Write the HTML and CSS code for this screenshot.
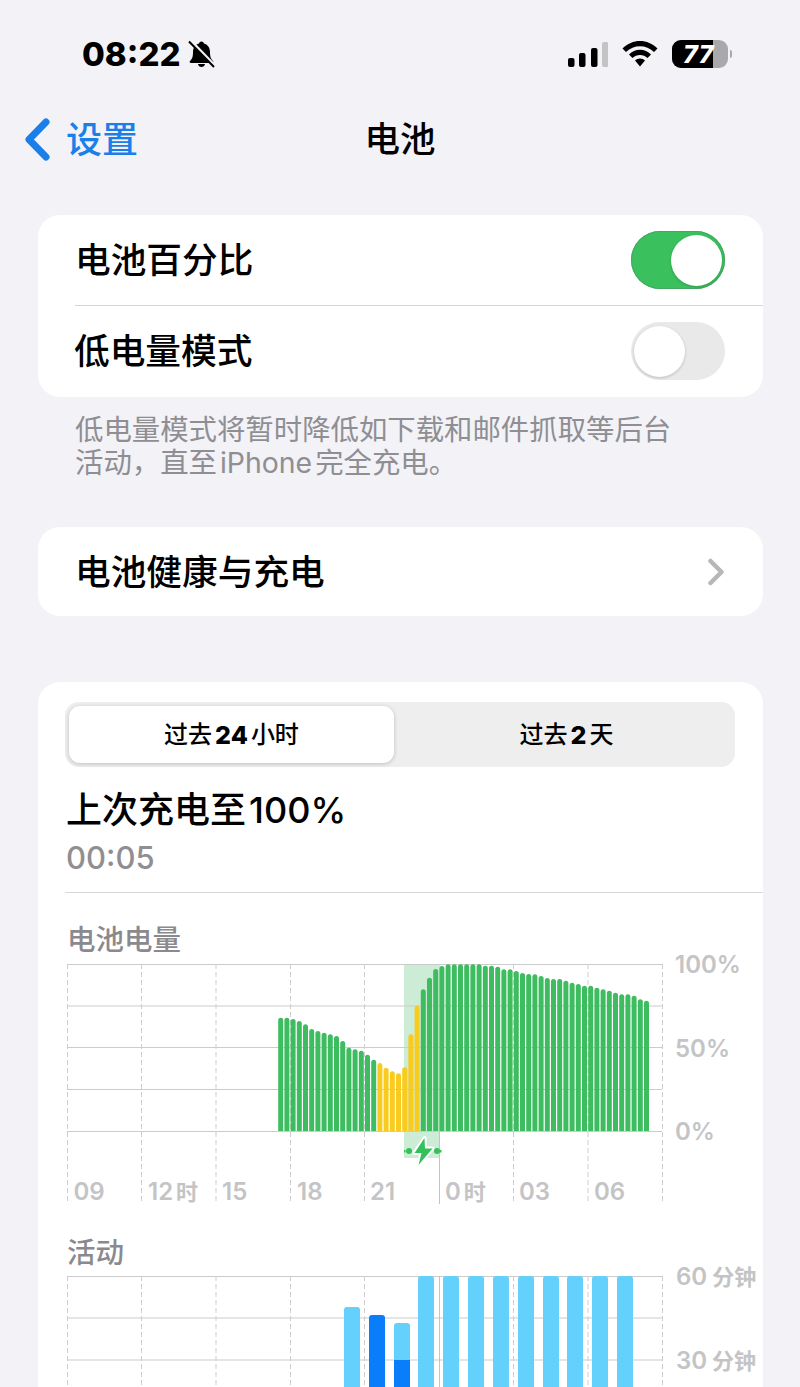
FILE: index.html
```html
<!DOCTYPE html>
<html lang="zh">
<head>
<meta charset="utf-8">
<title>电池</title>
<link rel="stylesheet" href="styles.css">
</head>
<body>
<div class="page">
  <header class="status">
    <div class="status-left">
      <span class="clock">08:22</span>
      <svg class="bell" viewBox="0 0 27 28" width="27" height="28" aria-hidden="true">
        <path d="M13.5 1.5c1.5 0 2.3 1 2.5 2 3.5 1 6 4 6 8.500 0 5 1 7 3 9 .8.900.300 2-1 2H3c-1.300 0-1.800-1.100-1-2 2-2 3-4 3-9 0-4.500 2.500-7.500 6-8.500.200-1 1-2 2.500-2z"/>
        <path d="M10 24h7c-.300 2-1.700 3-3.500 3S10.300 26 10 24z"/>
        <path class="bell-gap" d="M2 0L27 26"/>
        <path class="bell-slash" d="M1 1.500L26 27"/>
      </svg>
    </div>
    <div class="status-right">
      <svg class="signal" viewBox="0 0 40 25" width="40" height="25" aria-hidden="true">
        <rect y="16" width="6.500" height="9" rx="2"/>
        <rect x="11" y="11" width="6.500" height="14" rx="2"/>
        <rect x="23" y="6" width="6.500" height="19" rx="2"/>
        <rect class="signal-off" x="34" width="6.500" height="25" rx="2"/>
      </svg>
      <svg class="wifi" viewBox="0 0 36 26" width="36" height="26" aria-hidden="true">
        <path d="M18 0C11.500 0 5.500 2.600 0.500 7.500L4 11C8 7.200 12.800 5.200 18 5.200S28 7.200 32 11l3.500-3.500C30.500 2.600 24.500 0 18 0z"/>
        <path d="M18 8.800c-4.300 0-8 1.700-11 4.700l3.500 3.500c2.100-2 4.600-3.100 7.500-3.100s5.400 1.100 7.500 3.100l3.500-3.500c-3-3-6.700-4.700-11-4.700z"/>
        <path d="M18 17.500c-2 0-3.700.700-5 2L18 25.500l5-6c-1.300-1.300-3-2-5-2z"/>
      </svg>
      <div class="battery">
        <div class="battery-body"><span class="battery-fill">77</span></div>
        <span class="battery-nub"></span>
      </div>
    </div>
  </header>

  <nav class="nav">
    <div class="back">
      <svg class="back-icon" viewBox="0 0 28 44" width="28" height="44" aria-hidden="true">
        <path d="M22 4L5 21.500 22 39"/>
      </svg>
      <span>设置</span>
    </div>
    <h1 class="nav-title">电池</h1>
  </nav>

  <section class="card card-first">
    <div class="row">
      <span>电池百分比</span>
      <div class="toggle toggle-on"><span class="knob"></span></div>
    </div>
    <div class="row-line"></div>
    <div class="row row-low">
      <span>低电量模式</span>
      <div class="toggle toggle-off"><span class="knob"></span></div>
    </div>
  </section>
  <p class="caption">低电量模式将暂时降低如下载和邮件抓取等后台<br>活动，直至<span class="latin">iPhone</span>完全充电。</p>

  <section class="card card-health">
    <div class="row row-health">
      <span>电池健康与充电</span>
      <svg class="disclosure" viewBox="0 0 18 28" width="18" height="28" aria-hidden="true">
        <path d="M3.500 3L14.500 14 3.500 25"/>
      </svg>
    </div>
  </section>

  <section class="card card-usage">
    <div class="segmented">
      <div class="segment segment-active">过去<b class="num">24</b>小时</div>
      <div class="segment segment-rest">过去<b class="num">2</b>天</div>
    </div>
    <h2 class="charge-title">上次充电至<span class="charge-num">100%</span></h2>
    <div class="charge-time">00:05</div>
    <div class="usage-line"></div>

    <h3 class="chart-label">电池电量</h3>
    <svg class="chart chart-battery" viewBox="65 960 698 250" width="698" height="250">
      <defs>
        <clipPath id="level-clip"><rect x="270" y="960" width="400" height="171"/></clipPath>
      </defs>
      <rect class="charge-band" x="404" y="964" width="36" height="194"/>
      <path class="grid-h" d="M67 964.500H662M67 1006H662M67 1047.500H662M67 1089.500H662M67 1131.500H662"/>
      <path class="grid-v" d="M67.500 964V1204M141.500 964V1204M216 964V1204M290.500 964V1204M364.500 964V1204M513.500 964V1204M588 964V1204M662.500 964V1204"/>
      <path class="grid-solid" d="M439.500 1131V1204"/>
      <g clip-path="url(#level-clip)">
        <path class="bars-green" d="M280.700 1140V1020.200M286.900 1140V1020.200M293.100 1140V1021.500M299.300 1140V1023.500M305.500 1140V1026.800M311.700 1140V1031.500M317.900 1140V1033.500M324.100 1140V1035.200M330.300 1140V1036.800M336.500 1140V1038.500M342.700 1140V1043.500M348.900 1140V1050.200M355.100 1140V1051.800M361.300 1140V1053.200M367.500 1140V1057.200M373.700 1140V1062.200M423.300 1140V991.800M429.500 1140V980.200M435.700 1140V971.500M441.900 1140V968.500M448.100 1140V966.800M454.300 1140V966.800M460.500 1140V966.800M466.700 1140V966.800M472.900 1140V966.800M479.100 1140V966.800M485.300 1140V968.200M491.500 1140V968.200M497.700 1140V969.200M503.900 1140V971.800M510.100 1140V971.800M516.300 1140V973.500M522.500 1140V975.500M528.700 1140V976.500M534.900 1140V976.800M541.100 1140V978.500M547.300 1140V980.500M553.500 1140V981.500M559.700 1140V981.500M565.900 1140V983.200M572.100 1140V985.200M578.300 1140V986.500M584.500 1140V988.200M590.700 1140V988.200M596.900 1140V990.200M603.100 1140V991.800M609.300 1140V993.200M615.500 1140V995.200M621.700 1140V996.800M627.900 1140V996.800M634.100 1140V998.200M640.300 1140V1001.800M646.500 1140V1003.200"/>
        <path class="bars-yellow" d="M379.900 1140V1065.500M386.100 1140V1070.200M392.300 1140V1073.800M398.500 1140V1075.800M404.700 1140V1069.800M410.900 1140V1036.800M417.100 1140V1008.200"/>
      </g>
      <path class="bolt-halo" d="M424.500 1138L414.500 1153H421.500L418.500 1165 432.500 1148.500H425z"/>
      <path class="bolt" d="M424.500 1138L414.500 1153H421.500L418.500 1165 432.500 1148.500H425z"/>
      <circle class="bolt-dot" cx="409" cy="1151" r="3"/>
      <circle class="bolt-dot" cx="437" cy="1151" r="3"/>
      <rect class="bolt" x="404" y="1150" width="1.500" height="2.500"/>
      <rect class="bolt" x="440" y="1150" width="1.500" height="2.500"/>
      <g class="axis">
        <text x="73.500" y="1200">09</text>
        <text x="148" y="1200">12<tspan class="unit" dx="3">时</tspan></text>
        <text x="222" y="1200">15</text>
        <text x="297" y="1200">18</text>
        <text x="370" y="1200">21</text>
        <text x="445" y="1200">0<tspan class="unit" dx="3">时</tspan></text>
        <text x="519" y="1200">03</text>
        <text x="594" y="1200">06</text>
        <text x="675" y="973">100%</text>
        <text x="675" y="1057">50%</text>
        <text x="675" y="1140">0%</text>
      </g>
    </svg>

    <h3 class="chart-label chart-label-activity">活动</h3>
    <svg class="chart chart-activity" viewBox="65 1270 698 140" width="698" height="140">
      <path class="grid-h" d="M67 1276.500H662M67 1318H662M67 1360H662"/>
      <path class="grid-v" d="M67.500 1276V1400M141.500 1276V1400M216 1276V1400M290.500 1276V1400M364.500 1276V1400M513.500 1276V1400M588 1276V1400M662.500 1276V1400"/>
      <path class="grid-solid" d="M439.500 1276V1400"/>
      <rect class="bar-light" x="344" y="1307" width="16" height="100" rx="3"/>
      <rect class="bar-dark" x="369" y="1315" width="16" height="100" rx="3"/>
      <rect class="bar-light" x="394" y="1323" width="16" height="100" rx="3"/>
      <rect class="bar-dark" x="394" y="1360" width="16" height="60"/>
      <rect class="bar-light" x="418" y="1276" width="16" height="130" rx="3"/>
      <rect class="bar-light" x="443" y="1276" width="16" height="130" rx="3"/>
      <rect class="bar-light" x="468" y="1276" width="16" height="130" rx="3"/>
      <rect class="bar-light" x="493" y="1276" width="16" height="130" rx="3"/>
      <rect class="bar-light" x="518" y="1276" width="16" height="130" rx="3"/>
      <rect class="bar-light" x="543" y="1276" width="16" height="130" rx="3"/>
      <rect class="bar-light" x="567" y="1276" width="16" height="130" rx="3"/>
      <rect class="bar-light" x="592" y="1276" width="16" height="130" rx="3"/>
      <rect class="bar-light" x="617" y="1276" width="16" height="130" rx="3"/>
      <g class="axis">
        <text x="676" y="1285">60<tspan class="unit" dx="5">分钟</tspan></text>
        <text x="676" y="1369">30<tspan class="unit" dx="5">分钟</tspan></text>
      </g>
    </svg>
  </section>
</div>
</body>
</html>
```

FILE: styles.css
```css
html, body {
  margin: 0;
  padding: 0;
  overflow: hidden;
}

body {
  background: #f2f2f7;
  color: #000;
  font-family: Inter, "Noto Sans CJK SC", sans-serif;
}

.page {
  width: 800px;
  height: 1387px;
  overflow: hidden;
  background: #f2f2f7;
}

/* status bar */
.status {
  height: 108px;
  display: flex;
  align-items: center;
  justify-content: space-between;
  padding: 0 68px 0 82px;
  box-sizing: border-box;
}

.status-left {
  display: flex;
  align-items: center;
  gap: 8px;
}

.clock {
  font-size: 33px;
  font-weight: 800;
  line-height: 36px;
}

.bell-gap {
  stroke: #f2f2f7;
  stroke-width: 3;
  fill: none;
}

.bell-slash {
  stroke: #000;
  stroke-width: 2;
  fill: none;
}

.status-right {
  display: flex;
  align-items: center;
}

.signal {
  margin-right: 14px;
}

.signal-off {
  fill: #c4c4c6;
}

.wifi {
  margin-right: 14px;
}

.battery {
  display: flex;
  align-items: center;
  gap: 2px;
}

.battery-body {
  width: 56px;
  height: 28px;
  border-radius: 9px;
  background: #a9a9ab;
  overflow: hidden;
}

.battery-fill {
  display: block;
  box-sizing: border-box;
  width: 41px;
  height: 28px;
  padding-left: 11px;
  background: #000;
  color: #fff;
  font-size: 25px;
  font-weight: 800;
  font-style: italic;
  line-height: 28px;
  letter-spacing: 0.5px;
  white-space: nowrap;
}

.battery-nub {
  width: 2px;
  height: 8px;
  border-radius: 0 2px 2px 0;
  background: #a9a9ab;
}

/* navigation */
.nav {
  height: 64px;
  display: grid;
  grid-template-columns: 1fr auto 1fr;
  align-items: center;
}

.back {
  display: flex;
  align-items: center;
  gap: 14px;
  padding-left: 24px;
  color: #1a7fe8;
  font-size: 36px;
  font-weight: 500;
  line-height: 44px;
}

.back-icon path {
  fill: none;
  stroke: #1a7fe8;
  stroke-width: 7;
  stroke-linecap: round;
  stroke-linejoin: round;
}

.nav-title {
  grid-column: 2;
  margin: 0;
  font-size: 35.500px;
  font-weight: 500;
  line-height: 44px;
}

/* cards */
.card {
  width: 725px;
  margin-left: 38px;
  background: #fff;
  border-radius: 22px;
}

.card-first {
  margin-top: 43px;
  height: 182px;
  overflow: hidden;
}

.row {
  height: 90px;
  display: flex;
  align-items: center;
  justify-content: space-between;
  padding: 0 38px 0 37px;
  font-size: 35.700px;
  font-weight: 500;
  line-height: 48px;
}

.row-low {
  height: 90px;
  padding-bottom: 1px;
  padding-left: 36px;
}

.row-line {
  height: 1px;
  margin-left: 37px;
  background: #d6d6d9;
}

.toggle {
  width: 94px;
  height: 58px;
  box-sizing: border-box;
  padding: 3px;
  border-radius: 29px;
  display: flex;
}

.toggle-on {
  justify-content: flex-end;
  background: #3ac15e;
  box-shadow: inset 0 0 0 1px #45a862;
}

.toggle-off {
  justify-content: flex-start;
  background: #e9e9ea;
}

.knob {
  width: 51px;
  height: 51px;
  margin-top: 0.500px;
  border-radius: 50%;
  background: #fff;
  box-shadow: 0 1px 3px rgba(0, 0, 0, 0.2);
}

.caption {
  margin: 16px 0 0;
  padding-left: 75px;
  padding-bottom: 1px;
  color: #8e8e93;
  font-size: 28.400px;
  line-height: 33px;
  white-space: nowrap;
}

.latin {
  margin: 0 3px;
}

.card-health {
  margin-top: 47px;
  height: 89px;
}

.row-health {
  height: 89px;
}

.disclosure path {
  fill: none;
  stroke: #b7b7ba;
  stroke-width: 4.500;
  stroke-linecap: round;
  stroke-linejoin: round;
}

.card-usage {
  margin-top: 66px;
  padding: 20px 0 60px 27px;
  box-sizing: border-box;
  height: 800px;
}

/* segmented control */
.segmented {
  width: 670px;
  height: 65px;
  box-sizing: border-box;
  padding: 4px;
  border-radius: 14px;
  background: #eeeeef;
  display: grid;
  grid-template-columns: 325px 1fr;
}

.segment {
  display: flex;
  align-items: center;
  justify-content: center;
  font-size: 24px;
  font-weight: 500;
  line-height: 32px;
}

.segment-rest {
  padding-left: 8px;
}

.segment-active {
  background: #fff;
  border-radius: 11px;
  box-shadow: 0 1px 4px rgba(0, 0, 0, 0.2);
}

.num {
  margin: 0 3px;
  font-weight: 800;
  font-size: 25px;
}

.charge-title {
  margin: 21px 0 0 1px;
  font-size: 36px;
  font-weight: 500;
  line-height: 44px;
}

.charge-num {
  margin-left: 3px;
  font-weight: 500;
}

.charge-time {
  margin: 6px 0 0 1px;
  color: #8e8e93;
  font-size: 31px;
  font-weight: 500;
  line-height: 40px;
}

.usage-line {
  height: 1px;
  margin-top: 14px;
  background: #d8d8db;
}

/* charts */
.chart-label {
  margin: 32px 0 5px 2px;
  color: #8a8a8e;
  font-size: 28.500px;
  font-weight: 500;
  line-height: 30px;
}

.chart-label-activity {
  margin: 28px 0 2px 2px;
}

.chart {
  display: block;
  overflow: visible;
}

.grid-h {
  stroke: #cbcbcd;
  stroke-width: 1;
  fill: none;
}

.grid-v {
  stroke: #cdcdcf;
  stroke-width: 1;
  stroke-dasharray: 5 3;
  fill: none;
}

.grid-solid {
  stroke: #c4c4c6;
  stroke-width: 1;
  fill: none;
}

.charge-band {
  fill: #cdecd5;
}

.bars-green,
.bars-yellow {
  fill: none;
  stroke-width: 5;
  stroke-linecap: round;
}

.bars-green {
  stroke: #3dbd5f;
}

.bars-yellow {
  stroke: #f9cb1f;
}

.bolt {
  fill: #34c15c;
}

.bolt-halo {
  fill: #fff;
  stroke: #fff;
  stroke-width: 4;
  stroke-linejoin: round;
}

.bolt-dot {
  fill: #34c15c;
}

.axis text {
  fill: #c4c4c6;
  font-family: Inter, "Noto Sans CJK SC", sans-serif;
  font-size: 24px;
  font-weight: 600;
}

.axis .unit {
  font-size: 22px;
  font-weight: 600;
}

.bar-light {
  fill: #64d0fc;
}

.bar-dark {
  fill: #0a7dfb;
}
```
